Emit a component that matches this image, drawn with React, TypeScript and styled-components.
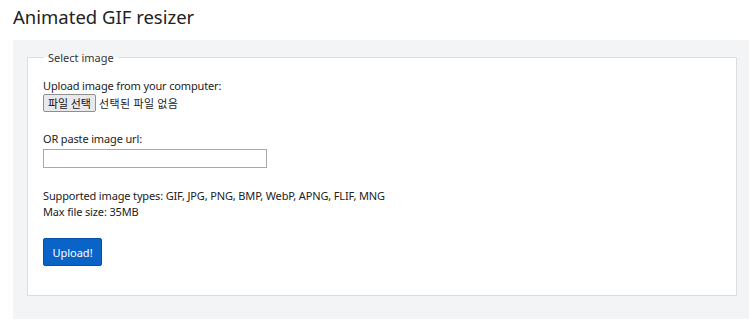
import styled, { createGlobalStyle } from "styled-components";

const GlobalStyle = createGlobalStyle`
  body {
    margin: 0;
    background: #fff;
    font-family: "Noto Sans", "Noto Sans CJK KR", sans-serif;
    color: #222;
  }
`;

const Page = styled.div`
  padding: 4px 1px 0 13px;
`;

const Title = styled.h1`
  margin: 0 0 10px 0;
  font-size: 18.5px;
  font-weight: 400;
  line-height: 26px;
  color: #222;
`;

const Panel = styled.div`
  background: #f3f4f6;
  padding: 10px 12px 23px 14px;
`;

const Fieldset = styled.fieldset`
  margin: 0;
  background: #fff;
  border: 1px solid #dcdde0;
  padding: 13px 15px 29px 15px;
  min-width: 0;
`;

const Legend = styled.legend`
  font-size: 11px;
  padding: 0 4px;
  margin-left: 1px;
  color: #333;
`;

const Group = styled.div<{ $gap?: number }>`
  display: flex;
  flex-direction: column;
  align-items: flex-start;
  margin-bottom: ${(p) => p.$gap ?? 0}px;
`;

const Label = styled.label`
  font-size: 11px;
  letter-spacing: -0.15px;
  line-height: 15px;
`;

const FileRow = styled.div`
  display: flex;
  align-items: center;
  gap: 3px;
  margin-top: 1px;
  font-size: 11px;
  font-family: "Noto Sans CJK KR", sans-serif;
`;

const FileButton = styled.button`
  font-family: "Noto Sans CJK KR", sans-serif;
  font-size: 11px;
  height: 18px;
  padding: 0 4px;
  border: 1px solid #8f8f8f;
  border-radius: 2px;
  background: #e9e9ed;
  color: #111;
  line-height: 14px;
`;

const FileStatus = styled.span`
  letter-spacing: 0.4px;
`;

const UrlInput = styled.input`
  width: 224px;
  height: 19px;
  box-sizing: border-box;
  border: 1px solid #a9a9a9;
  margin-top: 3px;
`;

const Info = styled.p`
  margin: 0 0 18px 0;
  font-size: 11px;
  letter-spacing: -0.15px;
  line-height: 16px;
`;

const UploadButton = styled.button`
  font-family: "Noto Sans", sans-serif;
  font-size: 11px;
  color: #fff;
  background: #0a64c8;
  border: 1px solid #0552a8;
  border-radius: 2px;
  width: 59px;
  height: 28px;
  padding: 0;
`;

export default function App() {
  return (
    <Page>
      <GlobalStyle />
      <Title>Animated GIF resizer</Title>
      <Panel>
        <Fieldset>
          <Legend>Select image</Legend>
          <Group $gap={19}>
            <Label>Upload image from your computer:</Label>
            <FileRow>
              <FileButton>파일 선택</FileButton>
              <FileStatus>선택된 파일 없음</FileStatus>
            </FileRow>
          </Group>
          <Group $gap={20}>
            <Label>OR paste image url:</Label>
            <UrlInput type="text" />
          </Group>
          <Info>
            Supported image types: GIF, JPG, PNG, BMP, WebP, APNG, FLIF, MNG
            <br />
            Max file size: 35MB
          </Info>
          <UploadButton>Upload!</UploadButton>
        </Fieldset>
      </Panel>
    </Page>
  );
}
